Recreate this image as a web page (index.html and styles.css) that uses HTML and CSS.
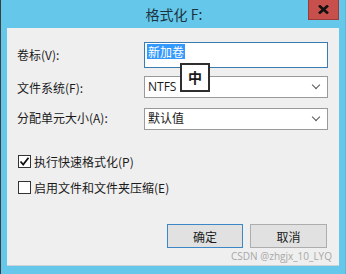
FILE: index.html
```html
<!DOCTYPE html>
<html>
<head>
    <meta charset="UTF-8">
    <title>格式化 F:</title>
    <link rel="stylesheet" href="styles.css">
</head>
<body>
    <div class="window">
        <div class="titlebar">
            <span></span>
            <span class="title">格式化 F:</span>
            <button class="close" type="button">
                <svg width="11" height="9" viewBox="0 0 11 9"><path d="M1 0.5 L10 8.5 M10 0.5 L1 8.5" stroke="#111" stroke-width="2.6"/></svg>
            </button>
        </div>
        <div class="panel">
            <form class="fields">
                <label>卷标(V):</label>
                <div class="textbox"><span class="selected">新加卷</span></div>
                <label>文件系统(F):</label>
                <div class="combo">NTFS<span class="arrow"></span></div>
                <label>分配单元大小(A):</label>
                <div class="combo">默认值<span class="arrow"></span></div>
            </form>
            <div class="checks">
                <div class="check"><span class="box"><svg width="11" height="11" viewBox="0 0 11 11"><path d="M1.5 5.5 L4.2 8.5 L9.5 1.8" fill="none" stroke="#111" stroke-width="1.8"/></svg></span>执行快速格式化(P)</div>
                <div class="check"><span class="box"></span>启用文件和文件夹压缩(E)</div>
            </div>
            <div class="buttons">
                <button type="button" class="btn default">确定</button>
                <button type="button" class="btn">取消</button>
            </div>
            <div class="ime">中</div>
            <div class="watermark">CSDN @zhgjx_10_LYQ</div>
        </div>
    </div>
</body>
</html>
```

FILE: styles.css
```css
body {
    margin: 0;
    font-family: "Open Sans", "Noto Sans CJK SC", sans-serif;
    font-size: 12px;
    color: #1a1a1a;
}
.window {
    width: 344px;
    height: 274px;
    background-color: #65c8ea;
    border-left: 1px solid #3a3f44;
    border-right: 1px solid #58b8da;
    display: flex;
    flex-direction: column;
}
.titlebar {
    height: 28px;
    display: grid;
    grid-template-columns: 1fr auto 1fr;
}
.title {
    font-family: "Noto Sans CJK SC", sans-serif;
    font-size: 14px;
    color: #1b3340;
    line-height: 29px;
    padding-left: 2px;
}
.close {
    justify-self: end;
    width: 31px;
    height: 20px;
    margin-right: 6px;
    background-color: #c7504d;
    border: 1px solid #9a3b38;
    border-top: none;
    padding: 0;
    display: flex;
    align-items: center;
    justify-content: center;
}
.panel {
    position: relative;
    margin: 0 6px 0 6px;
    height: 238px;
    background-color: #efefef;
    border-bottom: 1px solid #c9d3d8;
    padding: 14px 0 0 0;
    box-sizing: border-box;
}
.fields {
    display: grid;
    grid-template-columns: 137px 184px;
    grid-template-rows: 26px 22px 22px;
    row-gap: 8px;
    margin: 0;
}
.fields label {
    padding-left: 10px;
    align-self: center;
    font-family: "Noto Sans CJK SC", sans-serif;
}
.fields label:first-of-type {
    margin-top: -2px;
}
.textbox {
    border: 1px solid #3b7cb0;
    background-color: #fff;
    padding: 1px 2px;
    box-sizing: border-box;
}
.selected {
    background-color: #3399ff;
    color: #fff;
    font-family: "Noto Sans CJK SC", sans-serif;
    padding: 0 1px;
    line-height: 15px;
    display: inline-block;
}
.combo {
    border: 1px solid #9a9a9a;
    background-color: #fff;
    box-sizing: border-box;
    padding-left: 3px;
    line-height: 20px;
    font-family: "Open Sans", "Noto Sans CJK SC", sans-serif;
    display: flex;
    justify-content: space-between;
    align-items: center;
}
.fields .combo:last-child {
    margin-top: 2px;
    height: 22px;
}
.arrow {
    width: 5px;
    height: 5px;
    border-right: 1.5px solid #555;
    border-bottom: 1.5px solid #555;
    transform: rotate(45deg);
    margin-right: 8px;
    margin-top: -4px;
}
.checks {
    margin-top: 26px;
    padding-left: 11px;
    display: flex;
    flex-direction: column;
    gap: 12px;
}
.check {
    display: flex;
    align-items: center;
    gap: 3px;
    height: 14px;
    font-family: "Noto Sans CJK SC", sans-serif;
}
.box {
    width: 11px;
    height: 11px;
    border: 1px solid #333;
    background-color: #fff;
    display: flex;
    align-items: center;
    justify-content: center;
}
.buttons {
    display: flex;
    justify-content: flex-end;
    gap: 7px;
    padding-right: 12px;
    margin-top: 30px;
}
.btn {
    width: 77px;
    height: 24px;
    background-color: #e1e1e1;
    border: 1px solid #adadad;
    font-family: "Noto Sans CJK SC", sans-serif;
    font-size: 12px;
    color: #1a1a1a;
    padding: 0;
}
.btn.default {
    width: 76px;
    border: 1px solid #3c88c6;
}
.ime {
    position: absolute;
    left: 173px;
    top: 35px;
    width: 26px;
    height: 25px;
    border: 2px solid #2e2e2e;
    background-color: #fff;
    font-family: "Noto Sans CJK SC", sans-serif;
    font-weight: bold;
    font-size: 14px;
    text-align: center;
    line-height: 25px;
}
.watermark {
    position: absolute;
    right: 7px;
    bottom: 2px;
    font-family: "Open Sans", sans-serif;
    font-size: 10px;
    color: #a8a8a8;
}
```
